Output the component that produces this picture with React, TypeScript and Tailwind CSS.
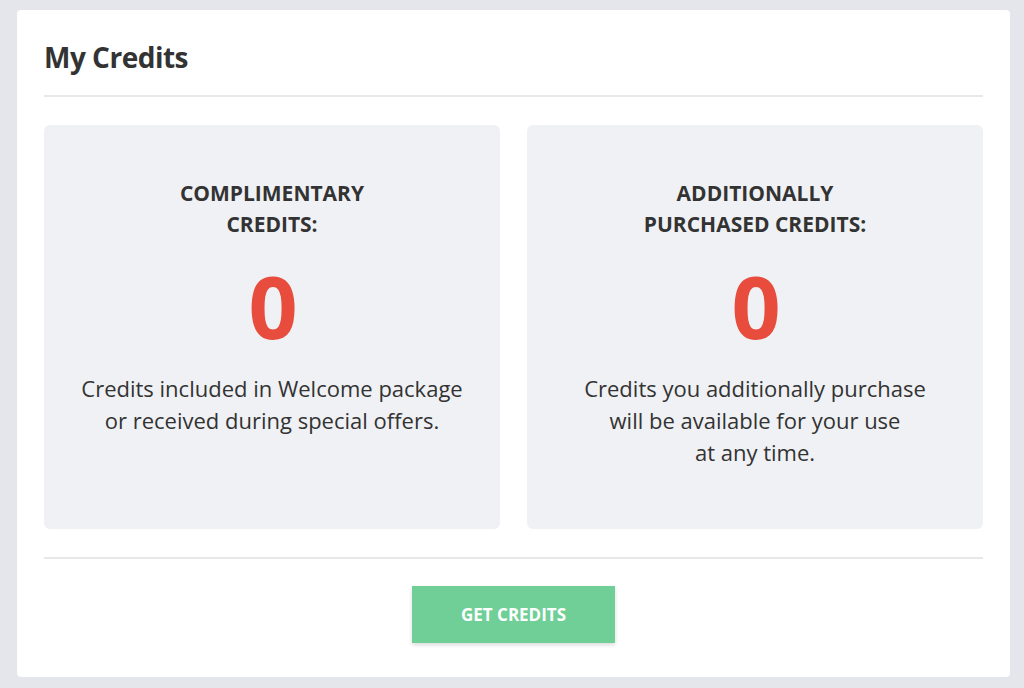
import React from "react";

interface CreditBox {
  title: string[];
  amount: number;
  lines: string[];
}

const boxes: CreditBox[] = [
  {
    title: ["COMPLIMENTARY", "CREDITS:"],
    amount: 0,
    lines: ["Credits included in Welcome package", "or received during special offers."],
  },
  {
    title: ["ADDITIONALLY", "PURCHASED CREDITS:"],
    amount: 0,
    lines: [
      "Credits you additionally purchase",
      "will be available for your use",
      "at any time.",
    ],
  },
];

export default function App() {
  return (
    <div
      className="min-h-[688px] bg-[#e4e6eb] pt-[10px] pl-[17px] pr-[14px] text-[#333]"
      style={{ fontFamily: "'Open Sans', 'Noto Sans', sans-serif" }}
    >
      <div className="rounded bg-white px-[27px] pb-[34px]">
        <h1 className="pt-[30px] pb-[21px] text-[28px] font-bold leading-[34px] tracking-[-0.5px] text-[#333]">
          My Credits
        </h1>
        <div className="h-[2px] bg-[#e8e8e8]" />

        <div className="mt-[28px] grid grid-cols-2 gap-[27px]">
          {boxes.map((box, i) => (
            <div
              key={i}
              className="h-[404px] rounded-md bg-[#f0f1f4] pt-[53px] text-center"
            >
              <div className="text-[21px] font-bold leading-[31px] text-[#333]">
                {box.title.map((t) => (
                  <div key={t}>{t}</div>
                ))}
              </div>
              <div className="mt-[24px] text-[86px] font-bold leading-[84px] tracking-[-2px] text-[#e74c3c]">
                {box.amount}
              </div>
              <div className="mt-[24px] text-[22px] leading-[32px] text-[#333]">
                {box.lines.map((l) => (
                  <div key={l}>{l}</div>
                ))}
              </div>
            </div>
          ))}
        </div>

        <div className="mt-[28px] h-[2px] bg-[#e8e8e8]" />

        <div className="mt-[27px] flex justify-center">
          <button className="h-[57px] w-[203px] bg-[#6fcf97] text-[17px] font-bold text-white shadow-[0_2px_4px_rgba(0,0,0,0.15)]">
            GET CREDITS
          </button>
        </div>
      </div>
    </div>
  );
}
